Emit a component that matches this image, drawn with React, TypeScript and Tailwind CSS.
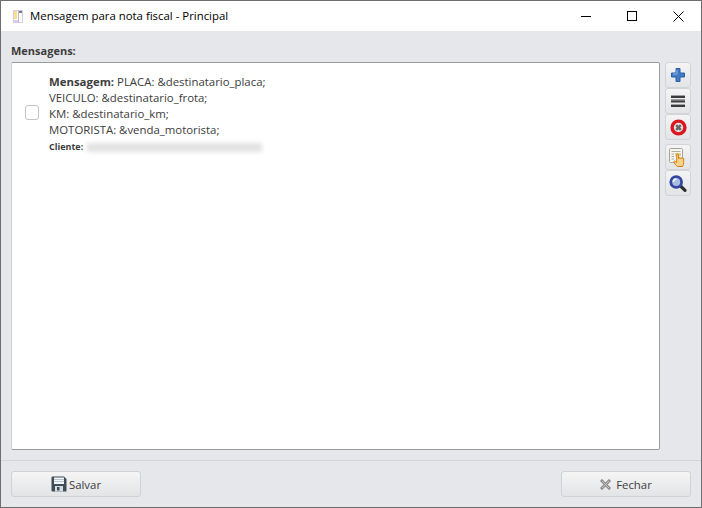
function SideButton({ children }: { children: React.ReactNode }) {
  return (
    <button className="flex h-[26px] w-[26px] items-center justify-center rounded-[3px] border border-[#d2d4d8] bg-gradient-to-b from-[#f4f4f5] to-[#e3e4e6]">
      {children}
    </button>
  );
}

function PlusIcon() {
  return (
    <svg width="14" height="14" viewBox="0 0 14 14">
      <path d="M5 .5h4v4.500h4.500v4H9v4.500H5V9H.5V5H5z" fill="#3f7cc6" stroke="#2a5da6" strokeWidth="1" />
      <path d="M6 2v4H2" fill="none" stroke="#8db8e8" strokeWidth="1" />
    </svg>
  );
}

function ListIcon() {
  return (
    <svg width="14" height="12" viewBox="0 0 14 12">
      <rect x="0" y="0" width="14" height="3" fill="#3a3a3a" />
      <rect x="0" y="4.500" width="14" height="3" fill="#3f3f3f" />
      <rect x="0" y="9" width="14" height="3" fill="#3a3a3a" />
      <rect x="0" y="0" width="14" height="1" fill="#a0a0a0" />
      <rect x="0" y="4.500" width="14" height="1" fill="#a8a8a8" />
      <rect x="0" y="9" width="14" height="1" fill="#a0a0a0" />
    </svg>
  );
}

function RemoveIcon() {
  return (
    <svg width="17" height="17" viewBox="0 0 17 17">
      <circle cx="8.500" cy="8.500" r="6.400" fill="#e4e4e4" stroke="#dc161e" strokeWidth="3.400" />
      <path d="M6.200 6.200l4.600 4.600M10.800 6.200l-4.600 4.600" stroke="#666666" strokeWidth="2.400" />
    </svg>
  );
}

function HandIcon() {
  return (
    <svg width="19" height="19" viewBox="0 0 19 19">
      <rect x=".5" y=".5" width="13" height="14" rx="1" fill="#f6f5ee" stroke="#a3a39c" />
      <path d="M2.500 3.500h9M2.500 6h2.500M2.500 8.500h2.500M2.500 11h2.500" stroke="#adada8" />
      <rect x="6" y="5" width="6" height="3" fill="#dccf9c" />
      <path d="M8.500 18.500c-1.500-1.200-3.500-3.200-3.500-4.800 0-.9 1.100-.9 1.600-.1l1.100 1V6.800c0-1.300 1.800-1.300 1.800 0V10.500c0-1.100 1.700-1.100 1.700 0 0-1.100 1.700-1.100 1.700 0 0-.9 1.800-.9 1.800.2v4c0 1.500-.7 2.600-1.200 3.800z" fill="#f9d488" stroke="#d27f16" strokeWidth="1" />
    </svg>
  );
}

function SearchIcon() {
  return (
    <svg width="18" height="17" viewBox="0 0 18 17">
      <path d="M11.500 11l4.500 4.300" stroke="#2e2e2e" strokeWidth="3.200" strokeLinecap="round" />
      <circle cx="7.200" cy="7" r="5.400" fill="#a9bfe2" stroke="#33479e" strokeWidth="2.800" />
      <path d="M4.200 7c.2-1.700 1.300-2.800 3.100-3" fill="none" stroke="#f4f8ff" strokeWidth="1.400" />
    </svg>
  );
}

function SaveIcon() {
  return (
    <svg width="16" height="16" viewBox="0 0 16 16">
      <path d="M1.500 .5h11.500l2.500 2.500v12.500H1.500a1 1 0 0 1-1-1V1.500a1 1 0 0 1 1-1z" fill="#3e4d57" />
      <rect x="3" y="1.500" width="10" height="6.500" fill="#f3f5f6" />
      <path d="M3 3.500h10M3 5.500h10" stroke="#b9c4cc" strokeWidth="1" />
      <rect x="4" y="10" width="8" height="5.500" fill="#d6dbdf" />
      <rect x="6" y="11" width="2.500" height="3.500" fill="#3e4d57" />
    </svg>
  );
}

function CloseCrossIcon() {
  return (
    <svg width="11" height="11" viewBox="0 0 11 11">
      <path d="M2 2l7 7M9 2l-7 7" stroke="#8b8b8b" strokeWidth="3" strokeLinecap="square" />
      <path d="M2 2l7 7M9 2l-7 7" stroke="#c8c8c8" strokeWidth="1" />
    </svg>
  );
}

function AppIcon() {
  return (
    <svg width="10" height="13" viewBox="0 0 10 13">
      <rect x=".5" y=".5" width="9" height="12" fill="#fdfcf6" stroke="#d4cce4" />
      <rect x="1" y="1" width="3" height="8" fill="#f8e08c" />
      <path d="M5.500 .5v12" stroke="#c4b8da" />
      <rect x="6" y="1" width="3" height="2" fill="#7a7a7a" />
      <rect x="1" y="10" width="4" height="2" fill="#d9cfea" />
    </svg>
  );
}

export default function App() {
  return (
    <div className="flex h-[508px] w-[702px] flex-col border border-[#6e6e6e] bg-[#e6e7ea] font-['Open_Sans',sans-serif] text-[#3c3c3c]">
      <div className="flex h-[30px] shrink-0 items-center bg-white">
        <div className="ml-[12px] flex w-[10px] justify-center">
          <AppIcon />
        </div>
        <span className="ml-[7px] text-[11.400px] text-black">Mensagem para nota fiscal - Principal</span>
        <div className="ml-auto flex items-center">
          <div className="flex h-[30px] w-[46px] items-center justify-center">
            <div className="h-px w-[10px] bg-black" />
          </div>
          <div className="flex h-[30px] w-[46px] items-center justify-center">
            <div className="h-[10px] w-[10px] border border-black" />
          </div>
          <div className="flex h-[30px] w-[46px] items-center justify-center">
            <svg width="11" height="11" viewBox="0 0 11 11">
              <path d="M.5 .5l10 10M10.500 .5l-10 10" stroke="#000" strokeWidth="1" />
            </svg>
          </div>
        </div>
      </div>

      <div className="flex min-h-0 flex-1 flex-col px-[10px]">
        <div className="pt-[12px] text-[11px] leading-[15px] font-bold">Mensagens:</div>
        <div className="mt-[4px] flex gap-[5px]">
          <div className="flex h-[388px] w-[650px] items-start rounded-[2px] border border-t-[#9a9a9a] border-r-[#a0a0a0] border-b-[#9a9a9a] border-l-[#d0d0d0] bg-white">
            <div className="ml-[13px] mt-[42px] h-[15px] w-[14px] rounded-[3px] border border-[#c4c4c4] bg-white" />
            <div className="ml-[10px] mt-[11px] text-[11.400px] leading-[16px]">
              <div>
                <b>Mensagem:</b> PLACA: &amp;destinatario_placa;
              </div>
              <div>VEICULO: &amp;destinatario_frota;</div>
              <div>KM: &amp;destinatario_km;</div>
              <div>MOTORISTA: &amp;venda_motorista;</div>
              <div className="mt-[2px] flex items-center text-[9px] leading-[14px] font-bold">
                Cliente:
                <div className="ml-[4px] h-[9px] w-[175px] bg-[#e2e2e2] blur-[2px]" />
              </div>
            </div>
          </div>
          <div className="flex flex-col">
            <SideButton><PlusIcon /></SideButton>
            <SideButton><ListIcon /></SideButton>
            <SideButton><RemoveIcon /></SideButton>
            <div className="h-[4px]" />
            <SideButton><HandIcon /></SideButton>
            <SideButton><SearchIcon /></SideButton>
          </div>
        </div>
      </div>

      <div className="flex h-[47px] shrink-0 items-start justify-between border-t border-[#d2d4d8] px-[10px] pt-[10px]">
        <button className="flex h-[26px] w-[130px] items-center justify-center rounded-[3px] border border-[#cfd1d5] bg-gradient-to-b from-[#f5f5f6] to-[#e3e4e6] text-[11.400px] text-[#3c3c3c]">
          <SaveIcon />
          <span className="ml-[2px] pt-[2px]">Salvar</span>
        </button>
        <button className="flex h-[26px] w-[130px] items-center justify-center rounded-[3px] border border-[#cfd1d5] bg-gradient-to-b from-[#f5f5f6] to-[#e3e4e6] text-[11.400px] text-[#3c3c3c]">
          <CloseCrossIcon />
          <span className="ml-[5px] pt-[2px]">Fechar</span>
        </button>
      </div>
    </div>
  );
}
